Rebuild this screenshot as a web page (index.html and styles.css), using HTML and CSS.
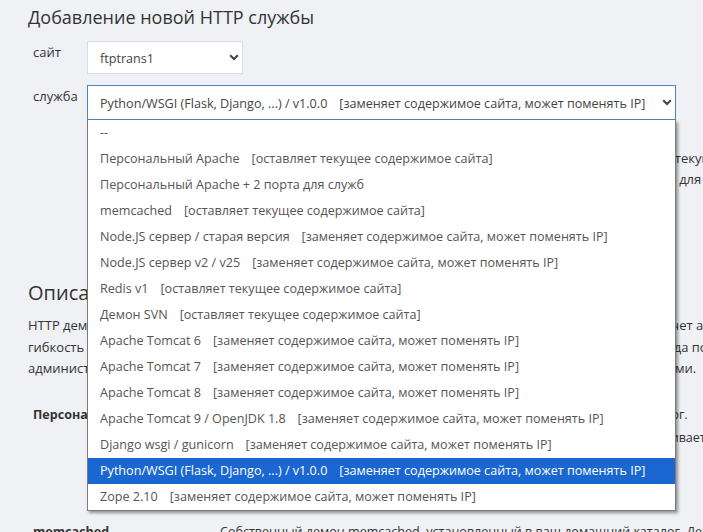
FILE: index.html
```html
<!DOCTYPE html>
<html lang="ru">
<head>
<meta charset="utf-8">
<title>Добавление новой HTTP службы</title>
<link rel="stylesheet" href="styles.css">
</head>
<body>
<main class="page">
  <h1 class="title">Добавление новой HTTP службы</h1>
  <form class="form">
    <div class="row">
      <label class="lbl">сайт</label>
      <div class="select select-site">
        <span class="sel-text">ftptrans1</span>
        <svg class="chev" width="10" height="7" viewBox="0 0 10 7"><path d="M1.2 1.3 L5 5 L8.8 1.3" fill="none" stroke="#444" stroke-width="2"/></svg>
      </div>
    </div>
    <div class="row">
      <label class="lbl">служба</label>
      <div class="field">
        <div class="select select-service">
          <span class="sel-text">Python/WSGI (Flask, Django, ...) / v1.0.0<span class="note">[заменяет содержимое сайта, может поменять IP]</span></span>
          <svg class="chev" width="10" height="7" viewBox="0 0 10 7"><path d="M1.2 1.3 L5 5 L8.8 1.3" fill="none" stroke="#444" stroke-width="2"/></svg>
        </div>
        <ul class="dropdown">
          <li class="opt">--</li>
          <li class="opt">Персональный Apache<span class="note">[оставляет текущее содержимое сайта]</span></li>
          <li class="opt">Персональный Apache + 2 порта для служб</li>
          <li class="opt">memcached<span class="note">[оставляет текущее содержимое сайта]</span></li>
          <li class="opt">Node.JS сервер / старая версия<span class="note">[заменяет содержимое сайта, может поменять IP]</span></li>
          <li class="opt">Node.JS сервер v2 / v25<span class="note">[заменяет содержимое сайта, может поменять IP]</span></li>
          <li class="opt">Redis v1<span class="note">[оставляет текущее содержимое сайта]</span></li>
          <li class="opt">Демон SVN<span class="note">[оставляет текущее содержимое сайта]</span></li>
          <li class="opt">Apache Tomcat 6<span class="note">[заменяет содержимое сайта, может поменять IP]</span></li>
          <li class="opt">Apache Tomcat 7<span class="note">[заменяет содержимое сайта, может поменять IP]</span></li>
          <li class="opt">Apache Tomcat 8<span class="note">[заменяет содержимое сайта, может поменять IP]</span></li>
          <li class="opt">Apache Tomcat 9 / OpenJDK 1.8<span class="note">[заменяет содержимое сайта, может поменять IP]</span></li>
          <li class="opt">Django wsgi / gunicorn<span class="note">[заменяет содержимое сайта, может поменять IP]</span></li>
          <li class="opt opt-active">Python/WSGI (Flask, Django, ...) / v1.0.0<span class="note">[заменяет содержимое сайта, может поменять IP]</span></li>
          <li class="opt">Zope 2.10<span class="note">[заменяет содержимое сайта, может поменять IP]</span></li>
        </ul>
        <p class="service-desc">При установке этой службы содержимое сайта будет заменено, IP-адрес может измениться; текущее<br>содержимое сайта будет удалено без возможности восстановления старых файлов, поэтому для сохранения данных сделайте копию.</p>
      </div>
    </div>
  </form>

  <section class="about">
    <h2 class="about-title">Описание служб</h2>
    <p class="about-text">HTTP демон, запущенный от имени вашего пользователя, обрабатывает запросы к сайтам, и ведет учет а<br>гибкость настройки, позволяя запускать приложения на разных языках и платформах и в средах, когда полностью подходит по<br>администрированию сервер управляется вами самостоятельно и всеми установленными программами.</p>
    <div class="svc-table">
      <div class="svc-name">Персональный Apache</div>
      <div class="svc-desc">Собственный веб-сервер Apache, установленный в свой домашний каталог.<br>Позволяет гибко настраивать модули и конфигурацию сервера, поддерживает</div>
      <div class="svc-name">memcached</div>
      <div class="svc-desc">Собственный демон memcached, установленный в ваш домашний каталог. Демон</div>
    </div>
  </section>
</main>
</body>
</html>
```

FILE: styles.css
```css
html, body {
  margin: 0;
  padding: 0;
}
body {
  background: #f0f1f5;
  font-family: "Open Sans", "Noto Sans", sans-serif;
  color: #333;
  overflow: hidden;
  width: 703px;
  height: 532px;
}
.page {
  padding: 4px 0 0 28px;
  white-space: nowrap;
}
.title {
  margin: 0;
  font-size: 18px;
  font-weight: 400;
  line-height: 27px;
  color: #333;
}
.form {
  margin-top: 10px;
  display: flex;
  flex-direction: column;
  gap: 11px;
}
.row {
  display: flex;
  align-items: flex-start;
}
.lbl {
  flex: none;
  width: 59px;
  padding-left: 5px;
  box-sizing: border-box;
  font-size: 13px;
  line-height: 18px;
  padding-top: 2px;
  color: #333;
}
.field {
  flex: none;
  position: relative;
}
.select {
  box-sizing: border-box;
  background: #fff;
  border: 1px solid #dcdde1;
  height: 33px;
  display: flex;
  align-items: center;
  justify-content: space-between;
  padding: 0 3px 0 12px;
  font-size: 12.6px;
  color: #444;
}
.select-site {
  width: 156px;
}
.select-service {
  width: 589px;
  height: 35px;
  border-color: #4a86b8;
}
.sel-text {
  padding-top: 1px;
}
.note {
  margin-left: 12px;
}
.chev {
  flex: none;
}
.dropdown {
  position: absolute;
  top: 35px;
  left: 0;
  z-index: 5;
  width: 589px;
  box-sizing: border-box;
  margin: 0;
  padding: 0;
  list-style: none;
  background: #fff;
  border: 1px solid #7b7b7b;
  border-top: none;
  box-shadow: 2px 2px 3px rgba(0, 0, 0, 0.4);
}
.opt {
  height: 26px;
  line-height: 26px;
  padding-left: 12px;
  font-size: 12.6px;
  color: #555;
}
.opt-active {
  background: #1a67d2;
  color: #fff;
}
.service-desc {
  margin: 28px 0 0 0;
  font-size: 13px;
  line-height: 21px;
  color: #333;
}
.about {
  margin-top: 89px;
}
.about-title {
  margin: 0;
  font-size: 20px;
  font-weight: 400;
  line-height: 28px;
}
.about-text {
  margin: 8px 0 0 0;
  font-size: 13px;
  line-height: 21.5px;
}
.svc-table {
  margin-top: 23px;
  display: grid;
  grid-template-columns: 192px auto;
  row-gap: 71px;
  font-size: 12.55px;
  line-height: 23px;
}
.svc-name {
  padding-left: 5px;
  font-weight: 700;
}
```
